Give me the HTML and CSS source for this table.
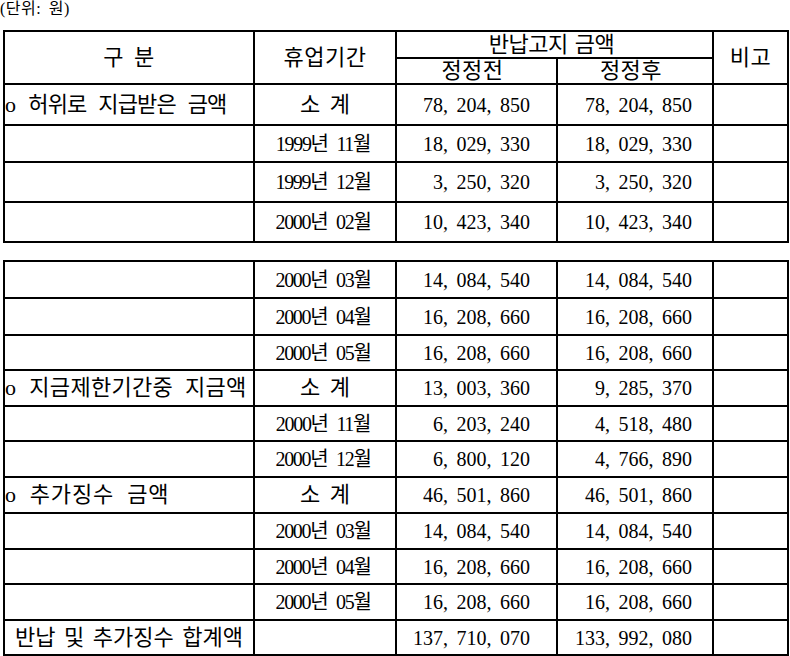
FILE: index.html
```html
<!DOCTYPE html>
<html lang="ko">
<head>
<meta charset="utf-8">
<title>반납고지 금액</title>
<link rel="stylesheet" href="styles.css">
</head>
<body>
<div class="unit">(단위: 원)</div>

<div class="tbl tbl-top">
  <div class="c hd span-r">구 분</div>
  <div class="c hd span-r">휴업기간</div>
  <div class="c hd span-c">반납고지 금액</div>
  <div class="c hd span-r">비고</div>
  <div class="c hd sub">정정전</div>
  <div class="c hd sub">정정후</div>

  <div class="c lbl lbl-a"><span class="bullet">o</span>허위로 지급받은 금액</div><div class="c mid">소 계</div><div class="c n3">78, 204, 850</div><div class="c n4">78, 204, 850</div><div class="c"></div>
  <div class="c"></div><div class="c date">1999년 11월</div><div class="c n3">18, 029, 330</div><div class="c n4">18, 029, 330</div><div class="c"></div>
  <div class="c"></div><div class="c date">1999년 12월</div><div class="c n3">3, 250, 320</div><div class="c n4">3, 250, 320</div><div class="c"></div>
  <div class="c"></div><div class="c date">2000년 02월</div><div class="c n3">10, 423, 340</div><div class="c n4">10, 423, 340</div><div class="c"></div>
</div>

<div class="tbl tbl-bottom">
  <div class="c"></div><div class="c date">2000년 03월</div><div class="c n3">14, 084, 540</div><div class="c n4">14, 084, 540</div><div class="c"></div>
  <div class="c"></div><div class="c date">2000년 04월</div><div class="c n3">16, 208, 660</div><div class="c n4">16, 208, 660</div><div class="c"></div>
  <div class="c"></div><div class="c date">2000년 05월</div><div class="c n3">16, 208, 660</div><div class="c n4">16, 208, 660</div><div class="c"></div>
  <div class="c lbl lbl-b"><span class="bullet">o</span>지금제한기간중 지금액</div><div class="c mid">소 계</div><div class="c n3">13, 003, 360</div><div class="c n4">9, 285, 370</div><div class="c"></div>
  <div class="c"></div><div class="c date">2000년 11월</div><div class="c n3">6, 203, 240</div><div class="c n4">4, 518, 480</div><div class="c"></div>
  <div class="c"></div><div class="c date">2000년 12월</div><div class="c n3">6, 800, 120</div><div class="c n4">4, 766, 890</div><div class="c"></div>
  <div class="c lbl lbl-c"><span class="bullet">o</span>추가징수 금액</div><div class="c mid">소 계</div><div class="c n3">46, 501, 860</div><div class="c n4">46, 501, 860</div><div class="c"></div>
  <div class="c"></div><div class="c date">2000년 03월</div><div class="c n3">14, 084, 540</div><div class="c n4">14, 084, 540</div><div class="c"></div>
  <div class="c"></div><div class="c date">2000년 04월</div><div class="c n3">16, 208, 660</div><div class="c n4">16, 208, 660</div><div class="c"></div>
  <div class="c"></div><div class="c date">2000년 05월</div><div class="c n3">16, 208, 660</div><div class="c n4">16, 208, 660</div><div class="c"></div>
  <div class="c lbl center">반납 및 추가징수 합계액</div><div class="c"></div><div class="c n3">137, 710, 070</div><div class="c n4">133, 992, 080</div><div class="c"></div>
</div>
</body>
</html>
```

FILE: styles.css
```css
html, body {
  margin: 0;
  padding: 0;
  background: #fff;
}

body {
  font-family: "Liberation Serif", "Noto Sans CJK KR", serif;
  color: #000;
  font-size: 20px;
}

.unit {
  height: 30px;
  font-size: 16px;
  line-height: 18px;
  word-spacing: 3px;
  letter-spacing: 0.5px;
}

.tbl {
  display: grid;
  width: max-content;
  margin-left: 3px;
  border-top: 2px solid #000;
  border-left: 2px solid #000;
  grid-template-columns: 250px 142px 161px 156px 75px;
}

.tbl-top {
  grid-template-rows: 27px 26px 41px 37px 40px 40px;
}

.tbl-bottom {
  margin-top: 17px;
  grid-template-rows: 37px 37px 35px 36px 35px 36px 36px 36px 35px 36px 35px;
}

.c {
  box-sizing: border-box;
  border-right: 2px solid #000;
  border-bottom: 2px solid #000;
  display: flex;
  align-items: center;
  justify-content: center;
  white-space: nowrap;
  line-height: 1;
  overflow: hidden;
}

.hd {
  font-size: 22px;
  letter-spacing: 0.5px;
  word-spacing: 4px;
}

.span-r {
  grid-row: span 2;
}

.span-c {
  grid-column: span 2;
  letter-spacing: -0.5px;
  word-spacing: 2px;
  padding-right: 6px;
}

.sub {
  padding-right: 8px;
}

.lbl {
  font-size: 22px;
  justify-content: flex-start;
  padding-left: 0;
}

.lbl-a {
  letter-spacing: -0.8px;
  word-spacing: 7px;
}

.lbl-b {
  letter-spacing: 0.3px;
  word-spacing: 6px;
}

.lbl-c {
  letter-spacing: 0.8px;
  word-spacing: 7px;
}

.bullet {
  margin-right: 13px;
}

.lbl.center {
  justify-content: center;
  letter-spacing: 0;
  word-spacing: 3px;
}

.mid {
  font-size: 22px;
  word-spacing: 4px;
}

.date {
  font-size: 20px;
  letter-spacing: -1.3px;
  word-spacing: 5px;
  padding-right: 4px;
}

.n3, .n4 {
  justify-content: flex-end;
  word-spacing: 3.5px;
}

.n3 {
  padding-right: 26px;
}

.n4 {
  padding-right: 20px;
}
```
